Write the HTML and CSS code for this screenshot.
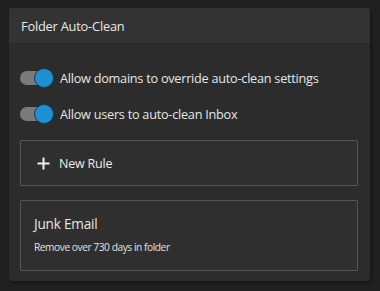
FILE: index.html
```html
<!DOCTYPE html>
<html lang="en">
<head>
    <meta charset="UTF-8">
    <title>Folder Auto-Clean</title>
    <link rel="stylesheet" href="styles.css">
</head>
<body>
    <div class="card">
        <div class="card-header">Folder Auto-Clean</div>
        <div class="card-body">
            <label class="toggle-row">
                <span class="toggle on"><span class="knob"></span></span>
                <span>Allow domains to override auto-clean settings</span>
            </label>
            <label class="toggle-row">
                <span class="toggle on"><span class="knob"></span></span>
                <span>Allow users to auto-clean Inbox</span>
            </label>
            <div class="box new-rule">
                <svg class="plus" width="13" height="13" viewBox="0 0 13 13">
                    <path d="M6.5 0.5v12M0.5 6.5h12" stroke="#f0f0f0" stroke-width="2" fill="none"/>
                </svg>
                <span>New Rule</span>
            </div>
            <div class="box rule">
                <div class="rule-title">Junk Email</div>
                <div class="rule-desc">Remove over 730 days in folder</div>
            </div>
        </div>
    </div>
</body>
</html>
```

FILE: styles.css
```css
* { margin: 0; padding: 0; box-sizing: border-box; }
body {
    font-family: "Open Sans", "Noto Sans", sans-serif;
    background: #212121;
    color: #ececec;
    padding: 8px 10px 10px 9px;
}
.card {
    width: 361px;
    height: 273px;
    background: #2c2c2c;
    border-radius: 3px;
    box-shadow: 2px 3px 4px rgba(0,0,0,0.35);
    overflow: hidden;
}
.card-header {
    height: 35px;
    background: #333333;
    padding: 0 12px;
    display: flex;
    align-items: center;
    font-size: 12.8px;
    letter-spacing: -0.2px;
    color: #e8e8e8;
}
.card-body {
    padding: 25px 12px 0 11px;
    display: flex;
    flex-direction: column;
}
.toggle-row {
    display: flex;
    align-items: center;
    gap: 7px;
    font-size: 12.7px;
    letter-spacing: -0.25px;
    height: 20px;
    margin-bottom: 16px;
    color: #e6e6e6;
}
.toggle {
    position: relative;
    width: 33px;
    height: 14px;
    border-radius: 7px;
    background: #7a7a7a;
}
.knob {
    position: absolute;
    right: -1px;
    top: -3px;
    width: 20px;
    height: 20px;
    border-radius: 50%;
    background: #1d90d4;
    border: 1px solid #1b3a4e;
}
.box {
    border: 1px solid #555555;
    background: #2f2f2f;
    border-radius: 1px;
}
.new-rule {
    height: 46px;
    display: flex;
    align-items: center;
    gap: 9px;
    padding-left: 16px;
    font-size: 12.5px;
    letter-spacing: -0.2px;
}
.rule {
    margin-top: 14px;
    height: 71px;
    padding: 13px 13px;
}
.rule-title {
    font-size: 13.6px;
    letter-spacing: -0.2px;
    color: #e6e6e6;
}
.rule-desc {
    margin-top: 7px;
    font-size: 10.2px;
    letter-spacing: -0.45px;
    color: #e0e0e0;
}
```
